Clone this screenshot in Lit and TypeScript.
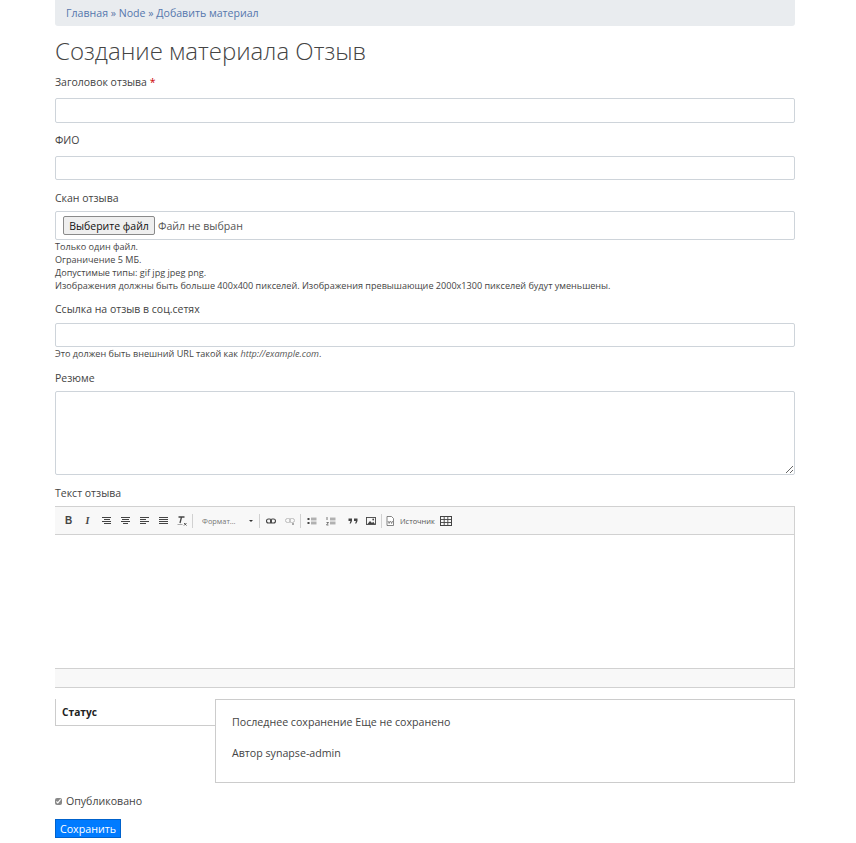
import { LitElement, html, css, svg } from "lit";
import { customElement } from "lit/decorators.js";

const ic = (body: unknown, w = 12, h = 12) => html`<svg class="ic" width=${w} height=${h} viewBox="0 0 12 12" aria-hidden="true">${body}</svg>`;
const lines = (rows: [number, number][]) =>
  ic(rows.map(([x, w], i) => svg`<rect x=${x} y=${2 + i * 2} width=${w} height="1" fill="#444"></rect>`));

@customElement("app-root")
export class AppRoot extends LitElement {
  static styles = css`
    :host { display: block; font-family: "Open Sans", "Noto Sans", sans-serif; color: #444; font-size: 11px; background: #fff; }
    * { box-sizing: border-box; }
    .page { width: 740px; margin-left: 55px; height: 843px; }
    .crumbs { height: 26px; background: #e9ecef; border-radius: 0 0 3px 3px; padding: 5px 11px 0; line-height: 16px; color: #5a76a8; font-size: 10.6px; }
    .crumbs a { color: #5577ad; text-decoration: none; }
    h1 { margin: 9px 0 0; font-weight: 300; font-size: 24px; line-height: 32px; color: #444; height: 32px; }
    .field { display: block; }
    label { display: block; font-size: 10.5px; line-height: 15px; color: #444; }
    .req { color: #c00; }
    .f1 { margin-top: 8px; }
    .f2 { margin-top: 10px; }
    .f3 { margin-top: 11px; }
    .f4 { margin-top: 10px; }
    .f5 { margin-top: 11px; }
    .f6 { margin-top: 11px; }
    .box { display: block; width: 100%; border: 1px solid #ced4da; border-radius: 2px; background: #fff; }
    input.box { height: 25px; margin-top: 8px; padding: 0 8px; }
    .f2 input.box { height: 24px; }
    .f4 input.box { height: 24px; margin-top: 6px; }
    .file { height: 29px; margin-top: 5px; padding: 5px 7px; display: flex; align-items: center; gap: 3px; font-size: 10.6px; color: #555; }
    .file button { height: 19px; width: 92px; padding: 0; font: inherit; font-size: 10.5px; color: #111; background: #efefef; border: 1px solid #8a8a8a; border-radius: 2px; }
    .desc { margin-top: 0; font-size: 9.08px; line-height: 13px; color: #444; }
    .desc em { color: #555; }
    textarea.box { height: 84px; margin-top: 5px; resize: vertical; font: inherit; }
    .editor { margin-top: 5px; border: 1px solid #d1d1d1; border-left: 0; height: 182px; display: flex; flex-direction: column; }
    .toolbar { height: 28px; background: #f8f8f8; border-bottom: 1px solid #d1d1d1; display: flex; align-items: center; padding-left: 4px; }
    .ic { display: block; flex: none; }
    .btn { width: 19px; height: 12px; display: flex; align-items: center; justify-content: center; flex: none; }
    .b { font: bold 10px "Liberation Sans", sans-serif; color: #444; }
    .i { font: italic bold 10px "Liberation Serif", serif; color: #444; }
    .sep { width: 1px; height: 14px; background: #d1d1d1; margin: 0 1px; flex: none; }
    .combo { width: 64px; padding-left: 8px; font-size: 7.4px; color: #777; display: flex; align-items: center; justify-content: space-between; padding-right: 5px; }
    .caret { width: 0; height: 0; border: 2.5px solid transparent; border-top-color: #333; border-bottom: 0; }
    .quote { margin-left: 3px; }
    .tight { margin-left: -1px; }
    .srcic { width: 14px; }
    .src { font-size: 7.4px; color: #555; margin: 0 4px 0 3px; }
    .content { flex: 1; background: #fff; }
    .foot { height: 19px; background: #f8f8f8; border-top: 1px solid #d1d1d1; }
    .tabs { margin-top: 11px; display: flex; align-items: flex-start; }
    .tab { width: 161px; height: 27px; border: 1px solid #ccc; border-top: 0; border-right: 0; padding-left: 6px; font-weight: 700; font-size: 10.2px; color: #222; line-height: 26px; margin-right: -1px; }
    .panel { flex: 1; height: 84px; border: 1px solid #ccc; padding: 15px 16px; font-size: 10.65px; line-height: 15px; color: #444; }
    .panel p { margin: 0 0 16px; }
    .pub { margin-top: 11px; display: flex; align-items: center; gap: 4px; font-size: 10.6px; line-height: 15px; color: #444; }
    .pub input { margin: 0; width: 7px; height: 7px; accent-color: #888; }
    .save { display: block; margin-top: 10px; width: 66px; height: 19px; background: #007bff; color: #fff; border: 1px solid #0062cc; border-radius: 0; padding: 0; font: inherit; font-size: 10.7px; line-height: 16px; }
  `;

  render() {
    return html`<div class="page">
      <nav class="crumbs"><a href="#">Главная</a> » <a href="#">Node</a> » <a href="#">Добавить материал</a></nav>
      <h1>Создание материала Отзыв</h1>
      <div class="field f1"><label>Заголовок отзыва <span class="req">*</span></label><input class="box" /></div>
      <div class="field f2"><label>ФИО</label><input class="box" /></div>
      <div class="field f3"><label>Скан отзыва</label>
        <div class="box file"><button>Выберите файл</button><span>Файл не выбран</span></div>
        <div class="desc">Только один файл.<br />Ограничение 5 МБ.<br />Допустимые типы: gif jpg jpeg png.<br />Изображения должны быть больше 400x400 пикселей. Изображения превышающие 2000x1300 пикселей будут уменьшены.</div>
      </div>
      <div class="field f4"><label>Ссылка на отзыв в соц.сетях</label><input class="box" />
        <div class="desc">Это должен быть внешний URL такой как <em>http://example.com</em>.</div>
      </div>
      <div class="field f5"><label>Резюме</label><textarea class="box"></textarea></div>
      <div class="field f6"><label>Текст отзыва</label>
        <div class="editor">
          <div class="toolbar">
            <span class="btn b">B</span><span class="btn i">I</span>
            <span class="btn">${lines([[1, 9], [3, 6], [1, 9], [3, 7]])}</span>
            <span class="btn">${lines([[1, 9], [2, 7], [1, 9], [3, 5]])}</span>
            <span class="btn">${lines([[1, 9], [1, 6], [1, 9], [1, 6]])}</span>
            <span class="btn">${lines([[1, 9], [1, 9], [1, 9], [1, 9]])}</span>
            <span class="btn tight">${ic(svg`<path d="M2.5 2h6M5.5 2 4 8" stroke="#444" stroke-width="1.3" fill="none"/><path d="M1.5 9.5h5" stroke="#aaa" stroke-width="1"/><path d="M8 8l2.5 2.5M10.5 8 8 10.5" stroke="#444" stroke-width=".9"/>`)}</span>
            <span class="sep"></span>
            <span class="combo"><span>Формат…</span><span class="caret"></span></span>
            <span class="sep"></span>
            <span class="btn">${ic(svg`<rect x="1.5" y="4" width="5" height="4" rx="2" fill="none" stroke="#444" stroke-width="1.1"/><rect x="5.5" y="4" width="5" height="4" rx="2" fill="none" stroke="#444" stroke-width="1.1"/>`)}</span>
            <span class="btn">${ic(svg`<rect x="1.5" y="3.5" width="5" height="4" rx="2" fill="none" stroke="#bbb" stroke-width="1"/><rect x="5.5" y="3.5" width="5" height="4" rx="2" fill="none" stroke="#bbb" stroke-width="1"/><path d="M8 8l2 2M10 8l-2 2" stroke="#aaa"/>`)}</span>
            <span class="sep"></span>
            <span class="btn">${ic(svg`<rect x="1.5" y="3" width="2" height="2" fill="#444"/><rect x="1.5" y="7" width="2" height="2" fill="#444"/><path d="M5 3.2h5.5M5 4.8h5.5M5 7.2h5.5M5 8.8h5.5" stroke="#777" stroke-width=".8"/>`)}</span>
            <span class="btn">${ic(svg`<path d="M2 2v3M1.5 7.5h2l-2 2.5h2" stroke="#555" stroke-width=".8" fill="none"/><path d="M5 3.2h5.5M5 4.8h5.5M5 7.2h5.5M5 8.8h5.5" stroke="#777" stroke-width=".8"/>`)}</span>
            <span class="btn quote">${ic(svg`<path d="M1.5 3.5h3.5v2.6L3.8 8.5H2.6l.9-2.4h-2zM7 3.5h3.5v2.6L9.3 8.5H8.1l.9-2.4H7z" fill="#444"/>`)}</span>
            <span class="btn tight">${ic(svg`<rect x="1.5" y="2.5" width="9" height="7" fill="none" stroke="#444" stroke-width=".9"/><path d="M2.5 9 5 6l2 2 1.2-1.2L10 9z" fill="#444"/><circle cx="8.2" cy="4.5" r=".9" fill="#444"/>`)}</span>
            <span class="sep"></span>
            <span class="btn srcic">${ic(svg`<path d="M3 1.5h4.5L9.5 3.5v7H3z" fill="#fff" stroke="#666" stroke-width=".8"/><path d="M4 6l1.2 2.5M6.2 6 5 8.5M6.5 6l1.2 2.5M8.7 6 7.5 8.5" stroke="#444" stroke-width=".6"/>`)}</span>
            <span class="src">Источник</span>
            <span class="btn srcic">${ic(svg`<rect x=".5" y="1.5" width="11" height="9" fill="none" stroke="#444"/><path d="M.5 4.5h11M.5 7.5h11M4.2 1.5v9M7.8 1.5v9" stroke="#444" stroke-width=".9"/>`)}</span>
          </div>
          <div class="content"></div>
          <div class="foot"></div>
        </div>
      </div>
      <div class="tabs">
        <div class="tab">Статус</div>
        <div class="panel"><p>Последнее сохранение Еще не сохранено</p><p>Автор synapse-admin</p></div>
      </div>
      <div class="pub"><input type="checkbox" checked /><span>Опубликовано</span></div>
      <button class="save">Сохранить</button>
    </div>`;
  }
}
